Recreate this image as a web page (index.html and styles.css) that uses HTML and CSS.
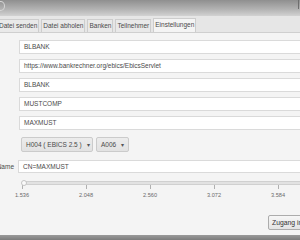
FILE: index.html
```html
<!DOCTYPE html>
<html lang="de">
<head>
    <meta charset="UTF-8">
    <title>EBICS Client</title>
    <link rel="stylesheet" href="styles.css">
</head>
<body>
    <div class="window">
        <div class="titlebar">
            <span class="winbtn"></span>
            <span class="edge"></span>
        </div>
        <nav class="tabs">
            <a class="tab">Datei senden</a>
            <a class="tab">Datei abholen</a>
            <a class="tab">Banken</a>
            <a class="tab">Teilnehmer</a>
            <a class="tab active">Einstellungen</a>
        </nav>
        <div class="content">
            <div class="fields">
                <div class="field">BLBANK</div>
                <div class="field">https://www.bankrechner.org/ebics/EbicsServlet</div>
                <div class="field">BLBANK</div>
                <div class="field">MUSTCOMP</div>
                <div class="field">MAXMUST</div>
            </div>
            <div class="combos">
                <div class="combo wide">H004 ( EBICS 2.5 )<span class="arrow">&#9662;</span></div>
                <div class="combo">A006<span class="arrow">&#9662;</span></div>
            </div>
            <div class="named">
                <span class="label">Name</span>
                <div class="field">CN=MAXMUST</div>
            </div>
            <div class="slider">
                <div class="track">
                    <span class="thumb"></span>
                </div>
                <div class="ticks">
                    <div class="tick"><span class="mark"></span>1.536</div>
                    <div class="tick"><span class="mark"></span>2.048</div>
                    <div class="tick"><span class="mark"></span>2.560</div>
                    <div class="tick"><span class="mark"></span>3.072</div>
                    <div class="tick"><span class="mark"></span>3.584</div>
                </div>
            </div>
            <div class="actions">
                <button class="btn">Zugang initialisieren</button>
            </div>
        </div>
        <div class="statusbar"></div>
    </div>
</body>
</html>
```

FILE: styles.css
```css
body {
    margin: 0;
    padding: 0;
    font-family: "Liberation Sans", Arial, sans-serif;
    font-size: 6.5px;
    color: #4a4a4a;
    background-color: #f4f4f4;
    overflow: hidden;
}
.window {
    width: 300px;
    height: 240px;
    display: flex;
    flex-direction: column;
    overflow: hidden;
}
.titlebar {
    height: 16px;
    flex: none;
    position: relative;
    background: linear-gradient(#8f8f8f, #b4b4b4 60%, #d2d2d2);
}
.winbtn {
    position: absolute;
    left: -4px;
    top: 1px;
    width: 7px;
    height: 8px;
    border-radius: 50%;
    border: 1px solid #d6d6d6;
}
.edge {
    position: absolute;
    right: 1px;
    top: 0;
    width: 1px;
    height: 9px;
    background-color: #6e6e6e;
}
.tabs {
    height: 16px;
    flex: none;
    display: flex;
    align-items: flex-end;
    gap: 2px;
    margin-left: -3px;
    background-color: #e6e6e6;
    border-bottom: 1px solid #cfcfcf;
}
.tab {
    height: 12px;
    line-height: 12px;
    padding: 0 1px;
    background-color: #e9e9e9;
    border: 1px solid #cdcdcd;
    border-bottom: none;
    white-space: nowrap;
}
.tab.active {
    background-color: #f4f4f4;
    height: 13px;
}
.content {
    flex: 1;
    padding-top: 7px;
    display: flex;
    flex-direction: column;
}
.fields {
    display: flex;
    flex-direction: column;
    gap: 5px;
    padding-left: 19px;
}
.field {
    height: 12px;
    line-height: 12px;
    padding-left: 4px;
    background-color: #fff;
    border: 1px solid #dadada;
    border-right: none;
    white-space: nowrap;
}
.combos {
    display: flex;
    gap: 3px;
    margin-top: 7px;
    padding-left: 21px;
}
.combo {
    height: 13px;
    line-height: 13px;
    padding: 0 4px;
    background: linear-gradient(#ececec, #e2e2e2);
    border: 1px solid #cbcbcb;
    border-radius: 2px;
    white-space: nowrap;
}
.combo.wide {
    width: 62px;
}
.combo .arrow {
    font-size: 6px;
    margin-left: 5px;
    color: #555;
}
.named {
    display: flex;
    align-items: center;
    margin-top: 8px;
    margin-left: -6px;
}
.named .label {
    width: 20px;
    text-align: right;
    margin-right: 4px;
    flex: none;
}
.named .field {
    flex: 1;
    height: 11px;
    line-height: 11px;
}
.slider {
    margin-top: 8px;
    padding-left: 22px;
}
.track {
    height: 2px;
    position: relative;
    background-color: #e2e2e2;
    border: 1px solid #d0d0d0;
    border-right: none;
}
.thumb {
    position: absolute;
    left: -2px;
    top: -2px;
    width: 4px;
    height: 4px;
    border-radius: 50%;
    background-color: #fafafa;
    border: 1px solid #c4c4c4;
}
.ticks {
    display: flex;
    margin-left: -32px;
}
.tick {
    width: 64px;
    flex: none;
    display: flex;
    flex-direction: column;
    align-items: center;
    font-size: 5.6px;
    color: #6a6a6a;
}
.mark {
    width: 1px;
    height: 4px;
    background-color: #b0b0b0;
    margin-bottom: 3px;
}
.actions {
    margin-top: 17px;
    padding-left: 268px;
}
.btn {
    height: 15px;
    padding: 0 3px;
    font-family: inherit;
    font-size: 6.8px;
    color: #333;
    white-space: nowrap;
    background: linear-gradient(#f6f6f6, #e4e4e4);
    border: 1px solid #acacac;
    border-radius: 2px;
}
.statusbar {
    height: 5px;
    flex: none;
    background: linear-gradient(#9a9a9a, #7c7c7c);
}
```
